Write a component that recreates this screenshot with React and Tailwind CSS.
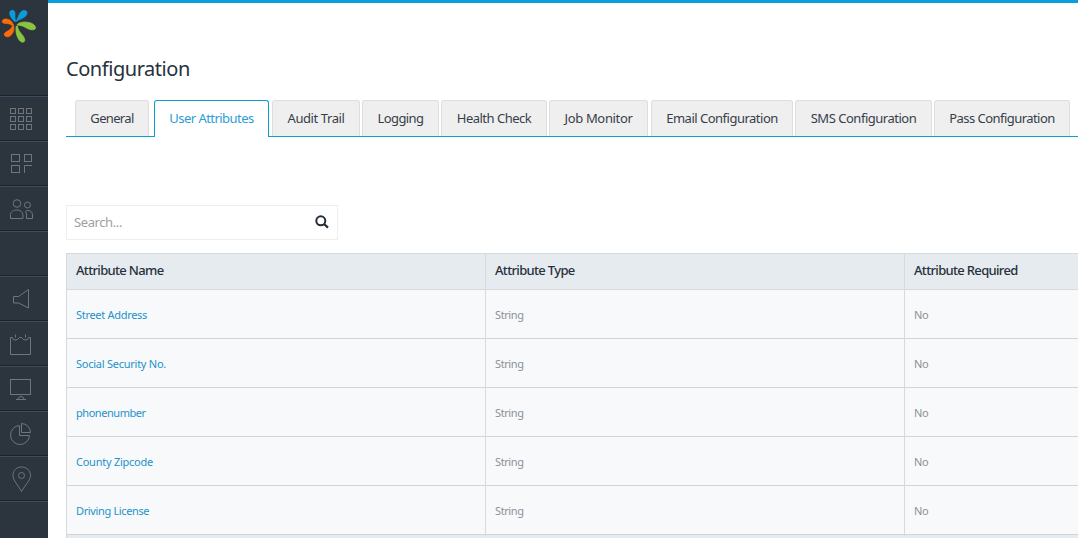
const tabs = [
  { label: "General", box: "w-[74px] mr-[5px]", text: "tracking-[-0.65px]" },
  { label: "User Attributes", box: "w-[115px] mr-[3px]", text: "tracking-[-0.55px]", active: true },
  { label: "Audit Trail", box: "w-[88px] mr-[2px]", text: "tracking-[-0.4px]" },
  { label: "Logging", box: "w-[77px] mr-[2px]", text: "tracking-[-0.6px]" },
  { label: "Health Check", box: "w-[106px] mr-[2px]", text: "tracking-[-0.5px]" },
  { label: "Job Monitor", box: "w-[99px] mr-[3px]", text: "tracking-[-0.35px]" },
  { label: "Email Configuration", box: "w-[142px] mr-[2px]", text: "tracking-[-0.5px]" },
  { label: "SMS Configuration", box: "w-[137px] mr-[2px]", text: "tracking-[-0.48px]" },
  { label: "Pass Configuration", box: "w-[136px]", text: "tracking-[-0.55px]" },
];

const rows = [
  { name: "Street Address", text: "tracking-[-0.3px]" },
  { name: "Social Security No.", text: "tracking-[-0.25px]" },
  { name: "phonenumber", text: "tracking-[-0.45px]" },
  { name: "County Zipcode", text: "tracking-[-0.25px]" },
  { name: "Driving License", text: "tracking-[-0.36px]" },
];

/* Each drawing fills a 48x43 menu cell. */
const menu = [
  <g key="grid">
    {[0, 1, 2].map((r) =>
      [0, 1, 2].map((c) => <rect key={`${r}${c}`} x={10.5 + c * 8} y={11.5 + r * 8} width="5" height="5" />)
    )}
  </g>,
  <g key="blocks">
    <rect x="11.5" y="12.5" width="8" height="7" />
    <rect x="24.5" y="12.5" width="7" height="7" />
    <rect x="11.5" y="23.5" width="8" height="7" />
    <path d="M24.5 31V23.5H32" />
  </g>,
  <g key="users">
    <circle cx="17" cy="16.5" r="3.8" />
    <circle cx="27.5" cy="18" r="3" />
    <path d="M10.5 31.5V27.5C11 24 14 23 17 23s5.500 1.500 6 5v3.500zM26.500 31.500h6V28c0-3-2-4.500-4.500-4.500-1 0-2 .5-2.500 1 .700 1 1 2 1 3.500z" />
  </g>,
  null,
  <path key="speaker" d="M28.500 12.500v18.500L18.500 26H13.500V19.500h5z" />,
  <g key="calendar">
    <path d="M12.500 15.500h-2v17h20v-17h-2M17.500 17.500l2-2h2l2 2" />
    <path d="M15.500 12.500v3M25.500 12.500v3M12.500 15.500q0 2.500 2.500 2.500t2.500-1M23.500 17q0 1 2.500 1t2.500-2.500" />
  </g>,
  <g key="monitor">
    <rect x="10.500" y="12.500" width="20" height="15" />
    <path d="M16 32.500h10M18 32q.5-2.500 3-2.500t3 2.500" />
  </g>,
  <g key="pie">
    <path d="M19.500 13.500A9.500 9.500 0 1 0 29.500 23.500H19.500z" />
    <path d="M21.500 11.500v9h9a9 9 0 0 0-9-9z" />
  </g>,
  <g key="pin">
    <path d="M21.500 34.500C18 28 13 23.500 13 18.500C13 13 17 10 21.500 10s9 3 9 8.500C30.500 23.500 25 28 21.500 34.500z" />
    <circle cx="21.500" cy="18.500" r="3" />
  </g>,
];

function Logo() {
  return (
    <svg width="48" height="95" viewBox="0 0 48 95" strokeWidth="0.7" strokeLinejoin="round">
      <g fill="#0a9ddb" stroke="#0a9ddb">
        <path d="M14.800 21.500C10.500 18 9.500 14.500 9.800 12C10.500 9.800 14 9.800 14.700 11.800C15.600 14.500 14.200 18 15.800 21.500z" />
        <path d="M16 21.500C18.500 17 19.500 12 22.500 10.700C25 9.800 27.600 11 27 13.500C25.500 18.500 20 18.500 16 21.500z" />
      </g>
      <g fill="#8bc53f" stroke="#8bc53f">
        <path d="M17 25C19 21.700 25 21.500 29.500 22.600C33 23.500 36 25.800 35.500 28.200C35 30.300 31.500 30.200 28.500 29C25 27.300 21.500 25 17 25z" />
        <path d="M16.300 26C15.200 31 16.500 36.500 19.500 40.500C21.700 43 24.700 42.500 24.800 40.200C24.600 35 18 32.500 17.500 26z" />
      </g>
      <g fill="#ff6a08" stroke="#ff6a08">
        <path d="M13.500 25.500C12.500 21 9 19 5.500 19C2.500 19 1.500 21.300 2.800 22.700C5 24.300 10 22.500 12.500 26z" />
        <path d="M12.500 25C12 30.500 5.500 31 4.300 33.800C4 36.300 6.500 37.500 9 36.500C13 34.800 14.800 29.500 13.500 25z" />
      </g>
    </svg>
  );
}

export default function App() {
  return (
    <div className="flex h-[538px] w-full overflow-hidden bg-white font-['Noto_Sans',sans-serif] text-[#27313b]">
      <aside className="w-12 shrink-0 bg-[#2c343e]">
        <div className="h-24 border-b border-[#1d2229]">
          <Logo />
        </div>
        {menu.map((icon, i) => (
          <div key={i} className="h-[45px] border-t border-b border-t-[#3c4b5e] border-b-[#1d2229]">
            <svg width="48" height="43" viewBox="0 0 48 43" fill="none" stroke="#6e757e">
              {icon}
            </svg>
          </div>
        ))}
        <div className="border-t border-[#3c4b5e]" />
      </aside>

      <main className="min-w-0 flex-1 overflow-hidden border-t-[3px] border-[#0a9fdb] pl-[18px]">
        <h1 className="mt-[51px] h-[30px] text-[20px] leading-[30px] tracking-[-0.45px]">Configuration</h1>

        <div className="mt-4 flex h-[37px] border-b border-[#0a9fd0] pl-[9px]">
          {tabs.map((tab) => (
            <div
              key={tab.label}
              className={`${tab.box} flex shrink-0 items-center justify-center rounded-t-[3px] border border-b-0 text-[13px] whitespace-nowrap ${
                tab.active ? "h-[37px] border-[#0a9fd0] bg-white text-[#2b9ed6]" : "h-9 border-[#dedede] bg-[#efefef] text-[#37404a]"
              }`}
            >
              <span className={tab.text}>{tab.label}</span>
            </div>
          ))}
        </div>

        <div className="mt-[68px] flex h-[35px] w-[272px] items-center justify-between border border-[#eeeeee] pr-2 pl-[7px]">
          <span className="text-[13px] tracking-[-0.4px] text-[#a0a0a0]">Search...</span>
          <svg className="-mt-0.5" width="14" height="14" viewBox="0 0 14 14" fill="none" stroke="#242e38" strokeWidth="2">
            <circle cx="5.800" cy="5.800" r="4.500" />
            <path d="M9 9l4 3.700" strokeWidth="2.300" />
          </svg>
        </div>

        <div className="mt-[13px] w-[1258px] border-t border-l border-[#d7dadd] bg-[#e6ebef]">
          <div className="grid h-9 grid-cols-[419px_419px_419px] border-b border-[#d7dadd] text-[13px] font-medium tracking-[-0.67px]">
            {["Attribute Name", "Attribute Type", "Attribute Required"].map((name) => (
              <div key={name} className="border-r border-[#d7dadd] pl-[9px] leading-[33px]">{name}</div>
            ))}
          </div>
          {rows.map((row) => (
            <div key={row.name} className="grid h-[49px] grid-cols-[419px_419px_419px] border-b border-[#d2d5d8] bg-[#f8f9fb] text-[11px] leading-[50px] text-[#8b9198]">
              <div className="border-r border-[#d7dadd] pl-[9px] text-[#2492c9]">
                <span className={row.text}>{row.name}</span>
              </div>
              <div className="border-r border-[#d7dadd] pl-[9px] tracking-[-0.4px]">String</div>
              <div className="pl-[9px] tracking-[-0.3px]">No</div>
            </div>
          ))}
          <div className="h-10" />
        </div>
      </main>
    </div>
  );
}
